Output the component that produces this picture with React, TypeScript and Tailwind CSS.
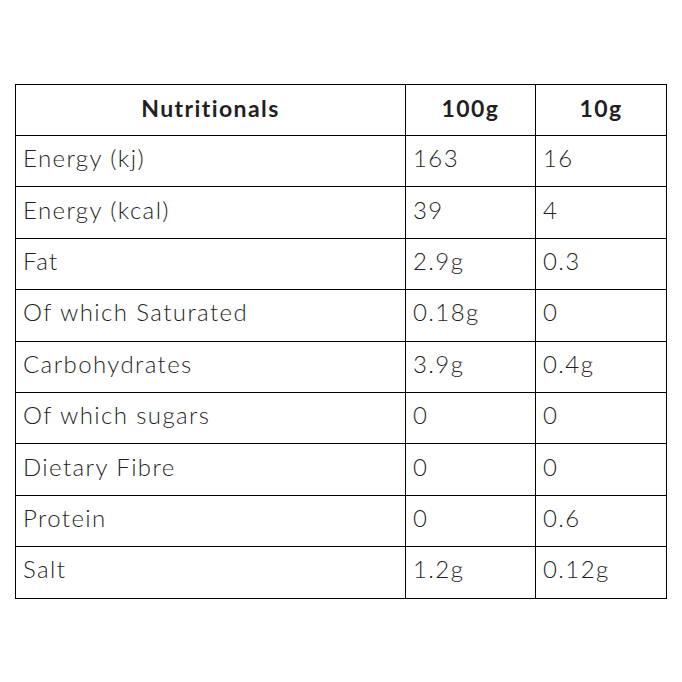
const rows: [string, string, string][] = [
  ['Energy (kj)', '163', '16'],
  ['Energy (kcal)', '39', '4'],
  ['Fat', '2.9g', '0.3'],
  ['Of which Saturated', '0.18g', '0'],
  ['Carbohydrates', '3.9g', '0.4g'],
  ['Of which sugars', '0', '0'],
  ['Dietary Fibre', '0', '0'],
  ['Protein', '0', '0.6'],
  ['Salt', '1.2g', '0.12g'],
];

export default function App() {
  return (
    <div className="w-[682px] h-[682px] bg-white pt-[84px] pl-[15px] font-['Lato',sans-serif] text-[#1f1f24] tracking-[1.4px]">
      <table className="border-collapse w-[652px] table-fixed">
        <colgroup>
          <col className="w-[390px]" />
          <col className="w-[130px]" />
          <col className="w-[131px]" />
        </colgroup>
        <thead>
          <tr className="h-[51px]">
            <th className="border border-black pb-[4px] text-[23px] font-bold text-center align-middle">Nutritionals</th>
            <th className="border border-black pb-[4px] text-[23px] font-bold text-center align-middle">100g</th>
            <th className="border border-black pb-[4px] text-[23px] font-bold text-center align-middle">10g</th>
          </tr>
        </thead>
        <tbody>
          {rows.map(([name, a, b]) => (
            <tr key={name} className="h-[51.4px]">
              <td className="border border-black px-[7px] pb-[6px] text-[24px] font-light align-middle">{name}</td>
              <td className="border border-black px-[7px] pb-[6px] text-[24px] font-light align-middle">{a}</td>
              <td className="border border-black px-[7px] pb-[6px] text-[24px] font-light align-middle">{b}</td>
            </tr>
          ))}
        </tbody>
      </table>
    </div>
  );
}
